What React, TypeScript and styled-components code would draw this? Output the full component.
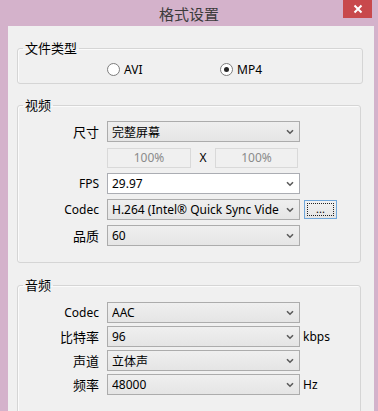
import React from "react";
import styled, { createGlobalStyle } from "styled-components";

const GlobalStyle = createGlobalStyle`
  html, body {
    margin: 0;
    padding: 0;
  }
  body {
    width: 378px;
    height: 411px;
    overflow: hidden;
    font-family: "Noto Sans", "Noto Sans CJK SC", sans-serif;
    font-size: 12px;
    color: #000;
  }
`;

const Window = styled.div`
  width: 378px;
  height: 411px;
  background: #d4b2cb;
  display: flex;
  flex-direction: column;
  overflow: hidden;
`;

const TitleBar = styled.div`
  position: relative;
  flex: none;
  height: 26px;
  display: flex;
  align-items: center;
  justify-content: center;
`;

const Title = styled.span`
  font-family: "Noto Sans CJK SC", sans-serif;
  font-size: 15px;
  color: #3b3b3b;
  line-height: 1;
`;

const CloseButton = styled.div`
  position: absolute;
  top: 0;
  right: 6px;
  width: 29px;
  height: 18px;
  background: #c8494c;
  display: flex;
  align-items: center;
  justify-content: center;
`;

const Client = styled.div`
  flex: 1;
  margin: 0 4px 0 8px;
  background: #f0f0f0;
  display: flex;
  flex-direction: column;
  overflow: hidden;
`;

const Group = styled.fieldset<{ $top: number; $right: number }>`
  margin: ${(p) => p.$top}px ${(p) => p.$right}px 0 9px;
  padding: 0;
  border: 1px solid #d5d5d5;
  border-radius: 3px;
  box-shadow: inset 1px 1px 0 #fbfbfb;
  min-width: 0;
  flex: none;
`;

const Legend = styled.legend`
  margin-left: 5px;
  padding: 0 2px;
  font-family: "Noto Sans CJK SC", sans-serif;
  font-size: 13px;
  line-height: 16px;
  height: 16px;
`;

const RadioRow = styled.div`
  display: flex;
  align-items: center;
  height: 16px;
  padding: 5px 0 6px 89px;
`;

const RadioOption = styled.label`
  width: 113px;
  display: flex;
  align-items: center;
  gap: 4px;
`;

const RadioDot = styled.span<{ $checked?: boolean }>`
  width: 13px;
  height: 13px;
  box-sizing: border-box;
  border-radius: 50%;
  border: 1px solid #7d7d7d;
  background: #fff;
  display: flex;
  align-items: center;
  justify-content: center;
  &::after {
    content: "";
    width: 5px;
    height: 5px;
    border-radius: 50%;
    background: ${(p) => (p.$checked ? "#262626" : "transparent")};
  }
`;

const Rows = styled.div<{ $gap: number; $pad: string }>`
  display: flex;
  flex-direction: column;
  gap: ${(p) => p.$gap}px;
  padding: ${(p) => p.$pad};
`;

const Row = styled.div`
  display: flex;
  align-items: center;
  height: 21px;
`;

const Label = styled.span<{ $cjk?: boolean }>`
  width: 89px;
  box-sizing: border-box;
  padding-right: 8px;
  text-align: right;
  font-size: ${(p) => (p.$cjk ? 13 : 12)}px;
  white-space: nowrap;
`;

const Combo = styled.div<{ $editable?: boolean }>`
  width: 193px;
  height: 21px;
  box-sizing: border-box;
  border: 1px solid ${(p) => (p.$editable ? "#abadb3" : "#acacac")};
  background: ${(p) =>
    p.$editable ? "#fff" : "linear-gradient(#efefef, #e5e5e5)"};
  display: flex;
  align-items: center;
  padding: 0 5px 0 4px;
  gap: 4px;
`;

const ComboText = styled.span`
  flex: 1;
  overflow: hidden;
  white-space: nowrap;
  font-size: 12px;
`;

const Field = styled.div<{ $w: number }>`
  width: ${(p) => p.$w}px;
  height: 20px;
  box-sizing: border-box;
  border: 1px solid #d9d9d9;
  background: #f0f0f0;
  color: #8a8a8a;
  display: flex;
  align-items: center;
  justify-content: center;
`;

const Times = styled.span`
  width: 24px;
  text-align: center;
`;

const DotsButton = styled.div`
  margin-left: 4px;
  width: 33px;
  height: 19px;
  box-sizing: border-box;
  border: 1px solid #6fa6da;
  background: linear-gradient(#f1f1f1, #e5e5e5);
  padding: 2px;
  display: flex;
`;

const FocusRect = styled.span`
  flex: 1;
  border: 1px dotted #222;
  display: flex;
  align-items: flex-end;
  justify-content: center;
  line-height: 1;
  font-size: 11px;
  padding-bottom: 1px;
`;

const Unit = styled.span`
  margin-left: 3px;
`;

const Chevron = () => (
  <svg width="8" height="6" viewBox="0 0 8 6">
    <path d="M1 1.2 L4 4.2 L7 1.2" fill="none" stroke="#5a5a5a" strokeWidth="1.6" />
  </svg>
);

function Select({ value, editable }: { value: string; editable?: boolean }) {
  return (
    <Combo $editable={editable}>
      <ComboText>{value}</ComboText>
      <Chevron />
    </Combo>
  );
}

export default function App() {
  return (
    <>
      <GlobalStyle />
      <Window>
        <TitleBar>
          <Title>格式设置</Title>
          <CloseButton>
            <svg width="10" height="10" viewBox="0 0 10 10">
              <path d="M1.5 1.5 L8.5 8.5 M8.5 1.5 L1.5 8.5" stroke="#fff" strokeWidth="2" />
            </svg>
          </CloseButton>
        </TitleBar>
        <Client>
          <Group $top={14} $right={11}>
            <Legend>文件类型</Legend>
            <RadioRow>
              <RadioOption>
                <RadioDot />
                AVI
              </RadioOption>
              <RadioOption>
                <RadioDot $checked />
                MP4
              </RadioOption>
            </RadioRow>
          </Group>

          <Group $top={13} $right={13}>
            <Legend>视频</Legend>
            <Rows $gap={5} $pad="8px 0 16px">
              <Row>
                <Label $cjk>尺寸</Label>
                <Select value="完整屏幕" />
              </Row>
              <Row>
                <Label />
                <Field $w={84}>100%</Field>
                <Times>X</Times>
                <Field $w={83}>100%</Field>
              </Row>
              <Row>
                <Label>FPS</Label>
                <Select value="29.97" editable />
              </Row>
              <Row>
                <Label>Codec</Label>
                <Select value="H.264 (Intel® Quick Sync Vide" />
                <DotsButton>
                  <FocusRect>...</FocusRect>
                </DotsButton>
              </Row>
              <Row>
                <Label $cjk>品质</Label>
                <Select value="60" />
              </Row>
            </Rows>
          </Group>

          <Group $top={14} $right={13}>
            <Legend>音频</Legend>
            <Rows $gap={3} $pad="9px 0 40px">
              <Row>
                <Label>Codec</Label>
                <Select value="AAC" />
              </Row>
              <Row>
                <Label $cjk>比特率</Label>
                <Select value="96" />
                <Unit>kbps</Unit>
              </Row>
              <Row>
                <Label $cjk>声道</Label>
                <Select value="立体声" />
              </Row>
              <Row>
                <Label $cjk>频率</Label>
                <Select value="48000" />
                <Unit>Hz</Unit>
              </Row>
            </Rows>
          </Group>
        </Client>
      </Window>
    </>
  );
}
